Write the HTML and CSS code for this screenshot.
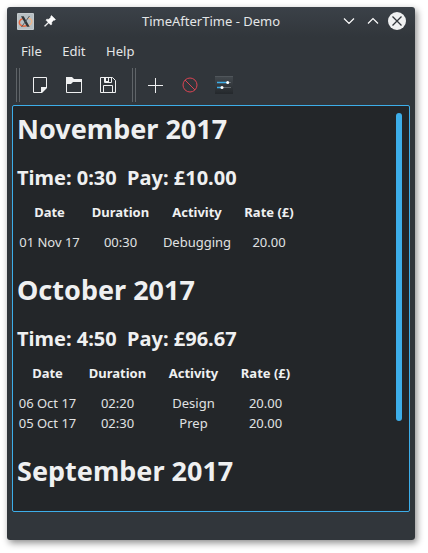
FILE: index.html
```html
<!DOCTYPE html>
<html lang="en">
<head>
<meta charset="utf-8">
<title>TimeAfterTime - Demo</title>
<link rel="stylesheet" href="styles.css">
</head>
<body>
<div class="window">
  <header class="titlebar">
    <svg class="app-icon" width="17" height="17" viewBox="0 0 17 17">
      <rect width="17" height="17" rx="1" fill="#c3c9cc"/>
      <rect x="1" y="1" width="15" height="15" fill="#b8c0c4"/>
      <path d="M6 5.500C2.500 6.500 1.500 9.500 3 11.500c1.500 1.800 4.500 2 7 1" fill="none" stroke="#e8663c" stroke-width="1.500"/>
      <path d="M11 5.200c3 .3 4.500 2 3.700 4.300-.6 1.600-2 2.700-3.700 3.300" fill="none" stroke="#efb58a" stroke-width="1.300"/>
      <path d="M4 3.200h2.700l6 10.600h-2.700z" fill="#30363a"/>
      <path d="M12.500 3 4.500 14" stroke="#4a5054" stroke-width=".9"/>
    </svg>
    <svg class="pin" width="12" height="12" viewBox="0 0 12 12">
      <path d="M7.500.5 11.500 4.500 10.600 5.300 9.900 5 7.700 7.200 7.800 9.200 6.900 10.100 4.700 7.900 1 11.500.4 11 4.100 7.300 1.900 5.100 2.800 4.200 4.800 4.300 7 2.100 6.700 1.400z" fill="#fcfcfc" stroke="#fcfcfc" stroke-width=".5"/>
    </svg>
    <h1 class="title">TimeAfterTime - Demo</h1>
    <svg class="controls" width="64" height="20" viewBox="0 0 64 20">
      <path d="M1 7.500 6 12.500 11 7.500M25 12.500 30 7.500 35 12.500" fill="none" stroke="#fcfcfc" stroke-width="1.200"/>
      <circle cx="54" cy="10" r="9" fill="#eff0f1"/>
      <path d="M49.500 5.500 58.500 14.500M58.500 5.500 49.500 14.500" stroke="#31363b" stroke-width="1.300"/>
    </svg>
  </header>
  <nav class="menubar"><span>File</span><span>Edit</span><span>Help</span></nav>
  <div class="toolbar">
    <i class="handle"></i>
    <svg class="tool" width="22" height="22" viewBox="0 0 22 22">
      <path d="M4.500 3.500h13v10l-5 5h-8z" fill="none" stroke="#eff0f1"/>
      <path d="M12 13h6v1l-5 5h-1z" fill="#eff0f1"/>
    </svg>
    <svg class="tool" width="22" height="22" viewBox="0 0 22 22">
      <path d="M3.500 8v10.500h15v-12" fill="none" stroke="#eff0f1"/>
      <path d="M3 3h6l2 2h8v3h-9l-2 2H3z" fill="#eff0f1"/>
    </svg>
    <svg class="tool" width="22" height="22" viewBox="0 0 22 22">
      <path d="M3.500 3.500h12l3 3v12h-15zM6.500 18.500v-7h9v7M7.500 3.500v5h7v-5" fill="none" stroke="#eff0f1"/>
      <path d="M7 3h5v5H7z" fill="#eff0f1"/>
      <path d="M9 4h2v3H9z" fill="#31363b"/>
    </svg>
    <i class="handle second"></i>
    <svg class="tool" width="22" height="22" viewBox="0 0 22 22">
      <path d="M11.500 4v15M4 11.500h15" stroke="#eff0f1"/>
    </svg>
    <svg class="tool" width="22" height="22" viewBox="0 0 22 22">
      <circle cx="11" cy="11" r="7" fill="none" stroke="#da4453"/>
      <path d="m6 6 10 10" stroke="#da4453"/>
    </svg>
    <svg class="tool" width="22" height="22" viewBox="0 0 22 22">
      <defs><linearGradient id="g" x2="0" y2="1"><stop stop-color="#444a4f"/><stop offset="1" stop-color="#24282c"/></linearGradient></defs>
      <path d="M2 2h18v18H2z" fill="url(#g)"/>
      <path d="M2 2.500h18" stroke="#50565b"/>
      <path d="M4 8.500h14M4 13.500h14" stroke="#62686c"/>
      <path d="M4 8.500h11M4 13.500h5" stroke="#3daee9" stroke-width="1.300"/>
      <circle cx="14.700" cy="8.500" r="1.500" fill="#fff"/><circle cx="9" cy="13.500" r="1.500" fill="#fff"/>
    </svg>
  </div>
  <main class="view">
    <div class="document">
      <section>
        <h2>November 2017</h2>
        <h3>Time: 0:30&nbsp; Pay: £10.00</h3>
        <table class="log november">
          <colgroup><col class="date"><col class="duration"><col class="activity"><col class="rate"></colgroup>
          <thead><tr><th>Date</th><th>Duration</th><th>Activity</th><th>Rate (£)</th></tr></thead>
          <tbody><tr><td>01 Nov 17</td><td>00:30</td><td>Debugging</td><td>20.00</td></tr></tbody>
        </table>
      </section>
      <section>
        <h2>October 2017</h2>
        <h3>Time: 4:50&nbsp; Pay: £96.67</h3>
        <table class="log october">
          <colgroup><col class="date"><col class="duration"><col class="activity"><col class="rate"></colgroup>
          <thead><tr><th>Date</th><th>Duration</th><th>Activity</th><th>Rate (£)</th></tr></thead>
          <tbody>
            <tr><td>06 Oct 17</td><td>02:20</td><td>Design</td><td>20.00</td></tr>
            <tr><td>05 Oct 17</td><td>02:30</td><td>Prep</td><td>20.00</td></tr>
          </tbody>
        </table>
      </section>
      <section><h2>September 2017</h2></section>
    </div>
    <div class="scrollbar"></div>
  </main>
</div>
</body>
</html>
```

FILE: styles.css
```css
* { box-sizing: border-box; }
body {
  margin: 0;
  padding: 7px;
  height: 553px;
  overflow: hidden;
  background: #fff;
  color: #eff0f1;
  font: 13px/18px "Noto Sans", sans-serif;
}
svg { display: block; flex: none; }
.window {
  display: flex;
  flex-direction: column;
  width: 408px;
  height: 533px;
  border-radius: 3px;
  background: linear-gradient(#3b4148, #31363b 30px);
  box-shadow: 2px 3px 7px rgba(0, 0, 0, .45);
}
.titlebar {
  display: flex;
  align-items: center;
  height: 28px;
  padding: 0 8px 0 10px;
}
.pin { margin-left: 10px; }
.title {
  flex: 1;
  margin: 0;
  padding-left: 23px;
  font-size: 13px;
  font-weight: 400;
  text-align: center;
  color: #e4e6e7;
}
.menubar {
  display: flex;
  gap: 20.5px;
  height: 33px;
  padding: 7px 14px 0;
  color: #e4e6e7;
}
.toolbar {
  display: flex;
  align-items: center;
  height: 34px;
  padding-left: 9px;
}
.handle {
  width: 4px;
  height: 34px;
  margin-right: 9px;
  border: solid #5f6468;
  border-width: 0 1px;
}
.handle.second { margin: 0 8px 0 1px; }
.tool { margin-right: 12px; }
.handle.second + .tool { margin-right: 13px; }
.view {
  display: flex;
  justify-content: space-between;
  width: 398px;
  height: 407px;
  margin: 3px 0 0 5px;
  border: 1px solid #3daee9;
  border-radius: 2px;
  background: #232629;
  overflow: hidden;
}
.document { padding: 5px 0 0 4px; }
section { margin-bottom: 19px; }
h2 {
  margin: 0 0 17px;
  font-size: 27px;
  line-height: 36px;
}
h3 {
  margin: 0 0 11px;
  font-size: 20px;
  line-height: 28px;
}
.log {
  table-layout: fixed;
  border-collapse: collapse;
  text-align: center;
  white-space: nowrap;
}
.log th, .log td { height: 20px; padding: 0; line-height: 18px; vertical-align: top; }
.log th { height: 30px; }
.log td { color: #e0e2e3; }
.november { width: 286px; }
.november .date { width: 65px; }
.november .duration { width: 77px; }
.november .activity { width: 76px; }
.november .rate { width: 68px; }
.october { width: 284px; }
.october .date { width: 61px; }
.october .duration { width: 79px; }
.october .activity { width: 73px; }
.october .rate { width: 71px; }
.scrollbar {
  width: 6px;
  height: 308px;
  margin: 7px 7px 0 0;
  border-radius: 3px;
  background: #3daee9;
}
```
